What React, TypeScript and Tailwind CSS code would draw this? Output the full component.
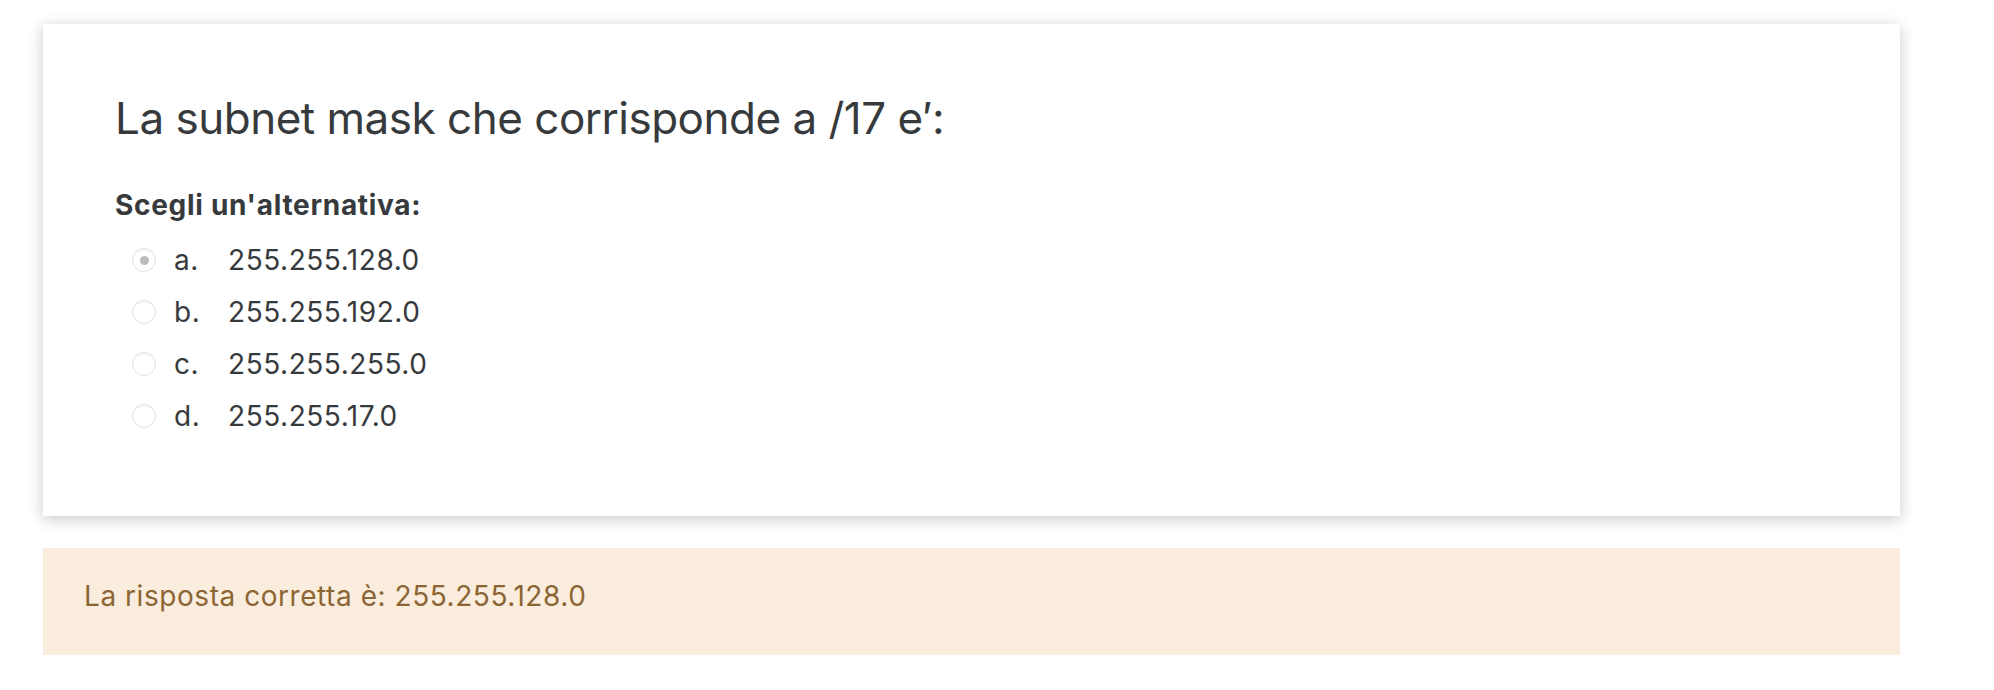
import React from "react";

const options = [
  { letter: "a.", value: "255.255.128.0", checked: true },
  { letter: "b.", value: "255.255.192.0", checked: false },
  { letter: "c.", value: "255.255.255.0", checked: false },
  { letter: "d.", value: "255.255.17.0", checked: false },
];

const Radio: React.FC<{ checked: boolean }> = ({ checked }) => (
  <span className="flex h-[24px] w-[24px] items-center justify-center rounded-full border border-[#e2e2e2] bg-white shadow-[inset_0_1px_2px_rgba(0,0,0,0.06)]">
    {checked && <span className="h-[9px] w-[9px] rounded-full bg-[#bdbdbd]" />}
  </span>
);

const App: React.FC = () => {
  return (
    <div className="min-h-screen bg-white font-['Inter','Noto_Sans',sans-serif] text-[#373a3c]">
      <div className="ml-[43px] w-[1857px] pt-[24px]">

        {/* Question card */}
        <div className="bg-white pl-[72px] pt-[68px] pb-[74px] shadow-[0_3px_14px_rgba(0,0,0,0.22)]">
          <h2 className="text-[44px] leading-[53px] font-normal tracking-[-0.5px]">
            La subnet mask che corrisponde a /17 e′:
          </h2>

          <div className="mt-[42px] text-[28px] leading-[36px] font-bold tracking-[0.7px]">Scegli un'alternativa:</div>

          <div className="mt-[11px]">
            {options.map((o) => (
              <div key={o.letter} className="flex h-[52px] items-center text-[28px] tracking-[0.55px]">
                <span className="ml-[17px]">
                  <Radio checked={o.checked} />
                </span>
                <span className="ml-[18px] w-[54px]">{o.letter}</span>
                <span>{o.value}</span>
              </div>
            ))}
          </div>
        </div>

        {/* Feedback */}
        <div className="mt-[32px] h-[107px] bg-[#faeddd] pl-[41px] pt-[28px] text-[28px] leading-[40px] tracking-[0.55px] text-[#8b6634]">
          La risposta corretta è: 255.255.128.0
        </div>

      </div>
    </div>
  );
};

export default App;
